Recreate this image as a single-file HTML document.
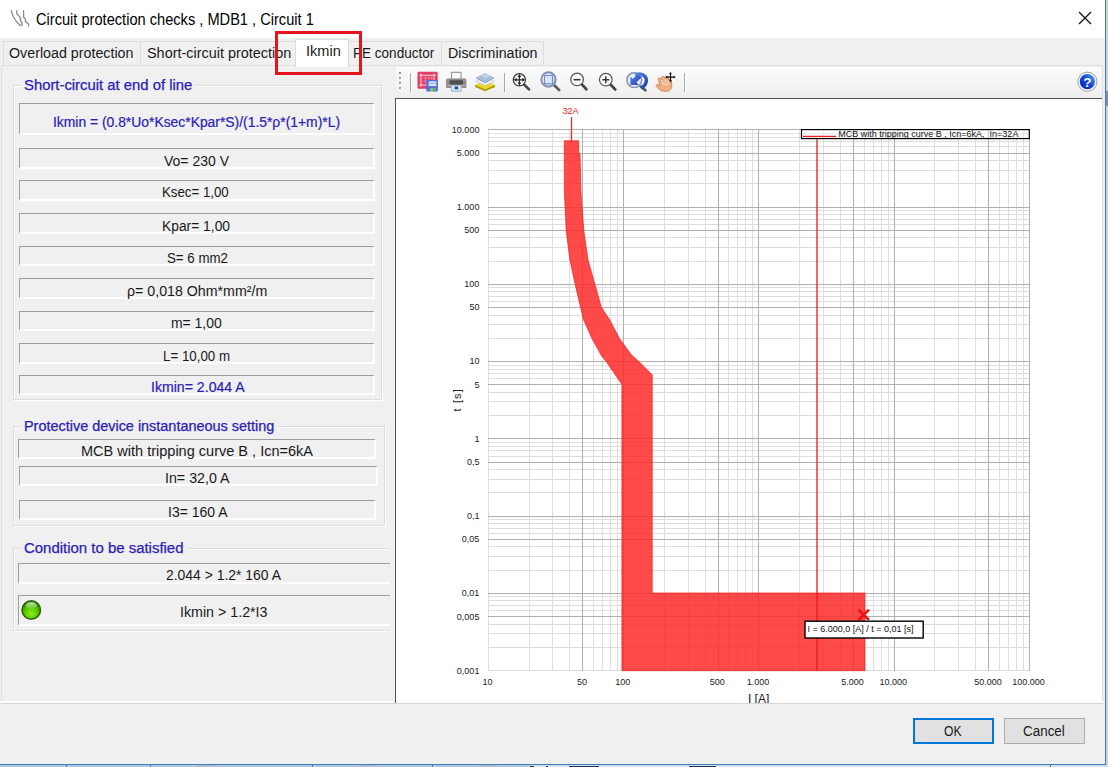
<!DOCTYPE html>
<html><head><meta charset="utf-8"><title>Circuit protection checks</title>
<style>
html,body{margin:0;padding:0;}
body{width:1108px;height:767px;overflow:hidden;position:relative;background:#bcd3ea;font-family:"Liberation Sans",sans-serif;}
.abs{position:absolute;}
.t{position:absolute;white-space:nowrap;transform-origin:0 50%;display:block;}
.sunk{position:absolute;box-sizing:border-box;border-top:1.2px solid #9c9c9c;border-left:1.2px solid #9c9c9c;border-bottom:2px solid #fff;border-right:2px solid #fff;background:#f0f0f0;}
.grp{position:absolute;box-sizing:border-box;border:1px solid #dddddd;box-shadow:1px 1px 0 #fff, inset 1px 1px 0 #fff;}
.gt{position:absolute;background:#f0f0f0;}
.tab{position:absolute;box-sizing:border-box;border:1px solid #dcdcdc;border-bottom:none;background:#f0f0f0;}
.btn{position:absolute;box-sizing:border-box;background:#e1e1e1;border:1px solid #adadad;}
</style></head><body>

<div class="abs" id="dlg" style="left:0;top:0;width:1105px;height:764px;background:#f0f0f0;border-right:1px solid #3f7cba;border-bottom:1px solid #3f7cba;overflow:hidden;">
<div class="abs" style="left:0;top:0;width:1105px;height:37.5px;background:#fff;"></div>
<svg class="abs" style="left:9px;top:8px" width="22" height="20" viewBox="0 0 22 20">
<g fill="none" stroke="#8a8a8a" stroke-width="1.3" stroke-linecap="round">
<path d="M2.3 2.6 C3.5 8 6.5 13.5 11.5 17.6"/>
<path d="M7.8 2.6 L7.8 5.5 L11.3 9.5 L11.3 12.5 L13 14.5 L13 17.6"/>
<path d="M14.6 2.6 L14.6 9 L16.5 11.5 L16.5 13.6 L19.6 16 L19.6 18"/>
</g></svg>
<span class="t" id="title" style="left:35.70px;top:9.56px;font-size:16px;line-height:19.200px;color:#000;transform:scaleX(0.9135);">Circuit protection checks , MDB1 , Circuit 1</span>
<svg class="abs" style="left:1077px;top:10px" width="16" height="16" viewBox="0 0 16 16"><path d="M2 2 L14 14 M14 2 L2 14" stroke="#111" stroke-width="1.3" fill="none"/></svg>
<div class="tab" style="left:3px;top:40.5px;width:137.5px;height:25px;"></div>
<span class="t" id="tab1" style="left:9.25px;top:44.75px;font-size:14px;line-height:16.800px;color:#1a1a1a;transform:scaleX(1.0189);">Overload protection</span>
<div class="tab" style="left:139.5px;top:40.5px;width:156.5px;height:25px;"></div>
<span class="t" id="tab2" style="left:146.75px;top:44.75px;font-size:14px;line-height:16.800px;color:#1a1a1a;transform:scaleX(1.0299);">Short-circuit protection</span>
<div class="tab" style="left:347px;top:40.5px;width:95px;height:25px;"></div>
<span class="t" id="tab4" style="left:353.00px;top:44.75px;font-size:14px;line-height:16.800px;color:#1a1a1a;transform:scaleX(0.9665);">PE conductor</span>
<div class="tab" style="left:441px;top:40.5px;width:103px;height:25px;"></div>
<span class="t" id="tab5" style="left:448.00px;top:44.75px;font-size:14px;line-height:16.800px;color:#1a1a1a;transform:scaleX(1.0179);">Discrimination</span>
<div class="abs" style="left:1px;top:65px;width:1102px;height:637px;box-sizing:border-box;border:1px solid #e0e0e0;background:#f0f0f0;"></div>
<div class="abs" style="left:1px;top:701px;width:1102px;height:1.5px;background:#fff;"></div>
<div class="abs" style="left:1px;top:702.5px;width:1102px;height:1px;background:#d5d5d5;"></div>
<div class="tab" style="left:294.5px;top:38.5px;width:54px;height:28px;background:#fff;"></div>
<span class="t" id="tab3" style="left:305.75px;top:42.65px;font-size:14px;line-height:16.800px;color:#1a1a1a;transform:scaleX(1.0388);">Ikmin</span>
<div class="abs" style="left:275px;top:30.5px;width:86.5px;height:44.2px;box-sizing:border-box;border:3px solid #e3141b;"></div>
<div class="abs" style="left:2px;top:66px;width:388px;height:635px;overflow:hidden;">
<div class="grp" style="left:11px;top:18.5px;width:368.5px;height:315.5px;"></div>
<div class="gt" style="left:19px;top:9.5px;width:175px;height:18px;"></div>
<div class="grp" style="left:11px;top:359.5px;width:372px;height:100.25px;"></div>
<div class="gt" style="left:19px;top:350.5px;width:257px;height:18px;"></div>
<div class="grp" style="left:11px;top:482px;width:427px;height:83.25px;"></div>
<div class="gt" style="left:19px;top:473px;width:166px;height:18px;"></div>
<div class="sunk" style="left:17px;top:36.5px;width:356px;height:32.5px;"></div>
<div class="sunk" style="left:17px;top:82.25px;width:356px;height:21.0px;"></div>
<div class="sunk" style="left:17px;top:113.5px;width:356px;height:21.0px;"></div>
<div class="sunk" style="left:17px;top:147px;width:356px;height:21.25px;"></div>
<div class="sunk" style="left:17px;top:179.5px;width:356px;height:20.75px;"></div>
<div class="sunk" style="left:17px;top:212.25px;width:356px;height:20.5px;"></div>
<div class="sunk" style="left:17px;top:244.75px;width:356px;height:20.5px;"></div>
<div class="sunk" style="left:17px;top:277.25px;width:356px;height:20.5px;"></div>
<div class="sunk" style="left:17px;top:308.5px;width:356px;height:20.5px;"></div>
<div class="sunk" style="left:15.5px;top:372.75px;width:358.75px;height:20.0px;"></div>
<div class="sunk" style="left:17px;top:399.75px;width:358.5px;height:20.5px;"></div>
<div class="sunk" style="left:17px;top:433.5px;width:357px;height:20.5px;"></div>
<div class="sunk" style="left:15.5px;top:497.25px;width:412.5px;height:20.5px;"></div>
<div class="sunk" style="left:15.5px;top:528.5px;width:412.5px;height:31.75px;"></div>
</div>
<span class="t" id="g1" style="left:24.25px;top:76.75px;font-size:14px;line-height:16.800px;color:#2a22b6;transform:scaleX(1.0598);-webkit-text-stroke:0.25px #2a22b6;">Short-circuit at end of line</span>
<span class="t" id="g2" style="left:24.25px;top:417.95px;font-size:14px;line-height:16.800px;color:#2a22b6;transform:scaleX(1.0306);-webkit-text-stroke:0.25px #2a22b6;">Protective device instantaneous setting</span>
<span class="t" id="g3" style="left:24.25px;top:540.25px;font-size:14px;line-height:16.800px;color:#2a22b6;transform:scaleX(1.0673);-webkit-text-stroke:0.25px #2a22b6;">Condition to be satisfied</span>
<span class="t" id="formula" style="left:53.00px;top:113.65px;font-size:14px;line-height:16.800px;color:#2a22b6;transform:scaleX(0.9909);-webkit-text-stroke:0.2px #2a22b6;">Ikmin = (0.8*Uo*Ksec*Kpar*S)/(1.5*ρ*(1+m)*L)</span>
<span class="t" id="vo" style="left:163.75px;top:153.25px;font-size:14px;line-height:16.800px;color:#1a1a1a;transform:scaleX(0.9998);">Vo= 230 V</span>
<span class="t" id="ksec" style="left:162.00px;top:184.45px;font-size:14px;line-height:16.800px;color:#1a1a1a;transform:scaleX(0.9476);">Ksec= 1,00</span>
<span class="t" id="kpar" style="left:162.00px;top:217.95px;font-size:14px;line-height:16.800px;color:#1a1a1a;transform:scaleX(0.9871);">Kpar= 1,00</span>
<span class="t" id="s" style="left:167.00px;top:250.45px;font-size:14px;line-height:16.800px;color:#1a1a1a;transform:scaleX(0.9501);">S= 6 mm2</span>
<span class="t" id="rho" style="left:126.75px;top:282.95px;font-size:14px;line-height:16.800px;color:#1a1a1a;transform:scaleX(1.0142);">ρ= 0,018 Ohm*mm²/m</span>
<span class="t" id="m" style="left:170.50px;top:315.45px;font-size:14px;line-height:16.800px;color:#1a1a1a;transform:scaleX(0.9954);">m= 1,00</span>
<span class="t" id="l" style="left:163.00px;top:347.95px;font-size:14px;line-height:16.800px;color:#1a1a1a;transform:scaleX(0.9512);">L= 10,00 m</span>
<span class="t" id="ik" style="left:150.75px;top:379.20px;font-size:14px;line-height:16.800px;color:#2a22b6;transform:scaleX(1.0079);-webkit-text-stroke:0.2px #2a22b6;">Ikmin= 2.044 A</span>
<span class="t" id="mcb" style="left:80.50px;top:442.95px;font-size:14px;line-height:16.800px;color:#1a1a1a;transform:scaleX(1.0371);">MCB with tripping curve B , Icn=6kA</span>
<span class="t" id="in" style="left:165.00px;top:469.95px;font-size:14px;line-height:16.800px;color:#1a1a1a;transform:scaleX(1.0165);">In= 32,0 A</span>
<span class="t" id="i3" style="left:168.00px;top:503.70px;font-size:14px;line-height:16.800px;color:#1a1a1a;transform:scaleX(0.9990);">I3= 160 A</span>
<span class="t" id="c1" style="left:166.25px;top:567.45px;font-size:14px;line-height:16.800px;color:#1a1a1a;transform:scaleX(0.9947);">2.044 &gt; 1.2* 160 A</span>
<span class="t" id="c2" style="left:179.50px;top:603.70px;font-size:14px;line-height:16.800px;color:#1a1a1a;transform:scaleX(1.0174);">Ikmin &gt; 1.2*I3</span>
<svg class="abs" style="left:20px;top:599px" width="22" height="22" viewBox="0 0 22 22">
<defs><radialGradient id="led" cx="0.5" cy="0.7" r="0.6"><stop offset="0" stop-color="#8cf01a"/><stop offset="0.6" stop-color="#58c800"/><stop offset="1" stop-color="#2f8f00"/></radialGradient>
<linearGradient id="ledh" x1="0" y1="0" x2="0" y2="1"><stop offset="0" stop-color="#fff" stop-opacity="0.75"/><stop offset="1" stop-color="#fff" stop-opacity="0"/></linearGradient></defs>
<circle cx="11.25" cy="11" r="9.2" fill="url(#led)" stroke="#2d6400" stroke-width="1.6"/>
<ellipse cx="11.25" cy="6.8" rx="5.6" ry="3.6" fill="url(#ledh)"/>
</svg>
<div class="abs" style="left:396px;top:67px;width:706px;height:31px;border-radius:0 4px 0 0;background:linear-gradient(#fbfbfb,#f4f4f4 60%,#ededed);"></div>
<div class="abs" style="left:399px;top:72px;width:2px;height:2px;background:#9c9c9c;box-shadow:1px 1px 0 #fff;"></div>
<div class="abs" style="left:399px;top:77px;width:2px;height:2px;background:#9c9c9c;box-shadow:1px 1px 0 #fff;"></div>
<div class="abs" style="left:399px;top:82px;width:2px;height:2px;background:#9c9c9c;box-shadow:1px 1px 0 #fff;"></div>
<div class="abs" style="left:399px;top:87px;width:2px;height:2px;background:#9c9c9c;box-shadow:1px 1px 0 #fff;"></div>
<div class="abs" style="left:410.0px;top:73px;width:1px;height:18.5px;background:#aaa;box-shadow:1px 0 0 #fff;"></div>
<div class="abs" style="left:504.0px;top:73px;width:1px;height:18.5px;background:#aaa;box-shadow:1px 0 0 #fff;"></div>
<div class="abs" style="left:683.5px;top:73px;width:1px;height:18.5px;background:#aaa;box-shadow:1px 0 0 #fff;"></div>
<svg class="abs" style="left:396px;top:66px" width="708" height="32" viewBox="396 66 708 32">
<defs>
<linearGradient id="hb" x1="0.1" y1="0.9" x2="0.9" y2="0.2"><stop offset="0" stop-color="#0a28c0"/><stop offset="0.55" stop-color="#1548d0"/><stop offset="1" stop-color="#3a90ea"/></linearGradient>
<linearGradient id="lensb" x1="0" y1="0" x2="1" y2="1"><stop offset="0" stop-color="#e3ebf9"/><stop offset="1" stop-color="#c3d1ec"/></linearGradient>
<linearGradient id="arrb" x1="0" y1="0" x2="1" y2="1"><stop offset="0" stop-color="#5a86e6"/><stop offset="1" stop-color="#1d3fb4"/></linearGradient>
</defs>
<!-- icon1: pink sheet + floppy -->
<rect x="417.5" y="71.8" width="20.2" height="17" rx="1.4" fill="#df3f66"/>
<g stroke="#fbd3dc" stroke-width="1" fill="none">
<path d="M419.3 75.3 H436.2 M419.3 85 H428 M421 73.4 V86.8 M434 73.4 V80.5"/>
<path d="M423.5 78 H432.5 M423.5 81 H427 M425.5 76.5 V83.5 M429 76.5 V80.5 M431.8 76.5 V80.5" stroke="#ee8aa4" stroke-width="0.8"/>
</g>
<rect x="426.3" y="79.9" width="11.5" height="11.7" rx="0.8" fill="#5470dc"/>
<rect x="428.7" y="81.3" width="7.6" height="4.8" fill="#dfe8fb"/>
<rect x="428.7" y="82.9" width="7.6" height="1.2" fill="#9db4ee"/>
<rect x="430.2" y="88.2" width="5.2" height="3.4" fill="#86cf7a"/>
<rect x="433" y="88.7" width="1.5" height="2.4" fill="#5b9a5a"/>
<!-- icon2: printer -->
<rect x="451.6" y="72.3" width="9.4" height="7" fill="#fdfdfd" stroke="#8c8c8c" stroke-width="1"/>
<path d="M447.6 78.6 H465 Q466.4 78.6 466.4 80.2 V87.9 H446.1 V80.2 Q446.1 78.6 447.6 78.6 Z" fill="#8d8d8d"/>
<rect x="449.6" y="80.2" width="13.4" height="4.3" rx="0.8" fill="#4f4f4f"/>
<rect x="447.2" y="85" width="18.2" height="1" fill="#b4b4b4"/>
<rect x="451.4" y="85.6" width="9.8" height="5.7" fill="#e1ebf7" stroke="#9fb2c8" stroke-width="0.8"/>
<rect x="454.6" y="86.6" width="3.6" height="2.6" fill="#27478a"/>
<rect x="452.6" y="89.6" width="7.4" height="0.9" fill="#9cc2e8"/>
<!-- icon3: layers -->
<path d="M475.2 85.2 L485.1 80.8 L495 85.2 V87 L485.1 91.2 L475.2 87 Z" fill="#a99700"/>
<path d="M475.2 85 L485.1 80.6 L495 85 L485.1 89.4 Z" fill="#ecd62a"/>
<path d="M475.8 81.4 L485.1 77.2 L494.4 81.4 L485.1 85.6 Z" fill="#eeeef8" stroke="#c3c5d6" stroke-width="0.7"/>
<path d="M476 77.4 L485.1 73 L494.2 77.4 L485.1 82 Z" fill="#a9c0d9"/>
<path d="M476 77.4 L485.1 82 L494.2 77.4 L494.2 78.3 L485.1 82.9 L476 78.3 Z" fill="#6f8db1"/>
<path d="M480 75.5 L485.1 73.2 L491 75.8 L485.6 78.2 Z" fill="#c7d8ea" opacity="0.8"/>
<!-- icon4: zoom extents -->
<path d="M523.9 84.4 L529 89.4" stroke="#454545" stroke-width="2.7" stroke-linecap="round"/>
<circle cx="519.4" cy="79.8" r="6.1" fill="#fff" stroke="#3a3a3a" stroke-width="1.3"/>
<g stroke="#2c2c2c" stroke-width="1.3" fill="#2c2c2c">
<path d="M519.4 75.6 V84 M515.2 79.8 H523.6" fill="none"/>
<path d="M519.4 74 L521.4 77 H517.4 Z M519.4 85.6 L521.4 82.6 H517.4 Z M513.6 79.8 L516.6 77.8 V81.8 Z M525.2 79.8 L522.2 77.8 V81.8 Z" stroke="none"/>
</g>
<!-- icon5: zoom window -->
<path d="M554.2 85.2 L559.2 90.1" stroke="#585858" stroke-width="2.7" stroke-linecap="round"/>
<circle cx="548.5" cy="79.5" r="7.2" fill="url(#lensb)" stroke="#8090ae" stroke-width="1.9"/>
<rect x="544.6" y="75.6" width="7.8" height="8.2" fill="#dbe6ff" stroke="#5f7fcf" stroke-width="0.9"/>
<!-- icon6: zoom out -->
<path d="M581.6 84.1 L586.4 89.2" stroke="#454545" stroke-width="2.7" stroke-linecap="round"/>
<circle cx="577.1" cy="79.4" r="6.3" fill="#fff" stroke="#555" stroke-width="1.25"/>
<path d="M573.6 79.7 H580.6" stroke="#333" stroke-width="1.6"/>
<!-- icon7: zoom in -->
<path d="M610.3 84.3 L615.3 89.5" stroke="#454545" stroke-width="2.7" stroke-linecap="round"/>
<circle cx="605.8" cy="79.7" r="6.3" fill="#fff" stroke="#555" stroke-width="1.25"/>
<path d="M602.3 79.8 H609.3 M605.8 76.3 V83.3" stroke="#333" stroke-width="1.5"/>
<!-- icon8: zoom previous -->
<path d="M640.8 86.6 L645.4 90.3" stroke="#3c5f58" stroke-width="2.7" stroke-linecap="round"/>
<circle cx="634.3" cy="80.1" r="7.4" fill="#e9eefa" stroke="#8593ab" stroke-width="1.6"/>
<path d="M636.6 74.6 C642 72.4 647.2 76.4 646.2 81.6 C645.7 84.4 644.2 86.2 642.4 87" fill="none" stroke="url(#arrb)" stroke-width="3.4" stroke-linecap="round"/>
<path d="M630.4 76.6 L630.4 85 L638.8 85 L636.4 82.6 L641.4 77.6 L637.8 74 L632.8 79 Z" fill="url(#arrb)"/>
<!-- icon9: pan hand -->
<path d="M658.6 80.4 C657.6 78.4 659.6 77 660.8 78.6 L661.6 79.6 C660.8 77 662.6 75.2 664.2 76.8 L665.2 78.2 C665.2 75.8 667.6 75.6 668.2 77.8 L668.8 80.2 C669.4 78.6 671.4 79 671.4 81 L671.8 85 C672 88.4 670.2 91.2 666.4 91.4 C662.4 91.6 660.4 90.4 658.2 88.4 L656.4 86.6 C655.6 85.4 656.6 84.2 658 84.8 L659.8 85.8 Z" fill="#f0b080" stroke="#cc8455" stroke-width="0.9"/>
<path d="M662 83 C664 84.5 666.5 85 669 84.2 M661.8 80.2 L663 83.4 M665.4 79 L666 83.2 M668.6 80.6 L668.8 83.4" stroke="#fbe3d1" stroke-width="1" fill="none"/>
<g stroke="#111" stroke-width="1.2" fill="#111">
<path d="M670.5 73 V81.2 M666.4 77.1 H674.6" fill="none"/>
<path d="M670.5 71.9 L671.9 73.9 H669.1 Z M670.5 82.3 L671.9 80.3 H669.1 Z M665.3 77.1 L667.3 75.7 V78.5 Z M675.7 77.1 L673.7 75.7 V78.5 Z" stroke="none"/>
</g>
<!-- help -->
<circle cx="1087.4" cy="81.7" r="9.6" fill="#f4f7fc" stroke="#a3a3a3" stroke-width="1"/>
<circle cx="1087.4" cy="81.7" r="7.6" fill="url(#hb)"/>
<text x="1087.4" y="86.6" font-family="Liberation Sans, sans-serif" font-weight="bold" font-size="13.5" fill="#fff" text-anchor="middle">?</text>
</svg>

<div class="abs" style="left:395px;top:97.5px;width:707px;height:605px;box-sizing:border-box;border-left:1.5px solid #555;border-top:1.5px solid #555;background:#fff;overflow:hidden;"></div>
<svg class="abs" style="left:396px;top:99px" width="706" height="603.5" viewBox="396 99 706 603.5" font-family="Liberation Sans, sans-serif">
<g stroke-width="1" shape-rendering="crispEdges">
<line x1="488.5" y1="129.8" x2="488.5" y2="670.7" stroke="#dedede"/>
<line x1="529.5" y1="129.8" x2="529.5" y2="670.7" stroke="#dedede"/>
<line x1="552.5" y1="129.8" x2="552.5" y2="670.7" stroke="#dedede"/>
<line x1="569.5" y1="129.8" x2="569.5" y2="670.7" stroke="#dedede"/>
<line x1="593.5" y1="129.8" x2="593.5" y2="670.7" stroke="#dedede"/>
<line x1="602.5" y1="129.8" x2="602.5" y2="670.7" stroke="#dedede"/>
<line x1="610.5" y1="129.8" x2="610.5" y2="670.7" stroke="#dedede"/>
<line x1="617.5" y1="129.8" x2="617.5" y2="670.7" stroke="#dedede"/>
<line x1="664.5" y1="129.8" x2="664.5" y2="670.7" stroke="#dedede"/>
<line x1="688.5" y1="129.8" x2="688.5" y2="670.7" stroke="#dedede"/>
<line x1="705.5" y1="129.8" x2="705.5" y2="670.7" stroke="#dedede"/>
<line x1="728.5" y1="129.8" x2="728.5" y2="670.7" stroke="#dedede"/>
<line x1="737.5" y1="129.8" x2="737.5" y2="670.7" stroke="#dedede"/>
<line x1="745.5" y1="129.8" x2="745.5" y2="670.7" stroke="#dedede"/>
<line x1="752.5" y1="129.8" x2="752.5" y2="670.7" stroke="#dedede"/>
<line x1="799.5" y1="129.8" x2="799.5" y2="670.7" stroke="#dedede"/>
<line x1="823.5" y1="129.8" x2="823.5" y2="670.7" stroke="#dedede"/>
<line x1="840.5" y1="129.8" x2="840.5" y2="670.7" stroke="#dedede"/>
<line x1="864.5" y1="129.8" x2="864.5" y2="670.7" stroke="#dedede"/>
<line x1="873.5" y1="129.8" x2="873.5" y2="670.7" stroke="#dedede"/>
<line x1="881.5" y1="129.8" x2="881.5" y2="670.7" stroke="#dedede"/>
<line x1="888.5" y1="129.8" x2="888.5" y2="670.7" stroke="#dedede"/>
<line x1="934.5" y1="129.8" x2="934.5" y2="670.7" stroke="#dedede"/>
<line x1="958.5" y1="129.8" x2="958.5" y2="670.7" stroke="#dedede"/>
<line x1="975.5" y1="129.8" x2="975.5" y2="670.7" stroke="#dedede"/>
<line x1="999.5" y1="129.8" x2="999.5" y2="670.7" stroke="#dedede"/>
<line x1="1008.5" y1="129.8" x2="1008.5" y2="670.7" stroke="#dedede"/>
<line x1="1016.5" y1="129.8" x2="1016.5" y2="670.7" stroke="#dedede"/>
<line x1="1023.5" y1="129.8" x2="1023.5" y2="670.7" stroke="#dedede"/>
<line x1="488.3" y1="670.5" x2="1029.5" y2="670.5" stroke="#dedede"/>
<line x1="488.3" y1="647.5" x2="1029.5" y2="647.5" stroke="#dedede"/>
<line x1="488.3" y1="633.5" x2="1029.5" y2="633.5" stroke="#dedede"/>
<line x1="488.3" y1="624.5" x2="1029.5" y2="624.5" stroke="#dedede"/>
<line x1="488.3" y1="610.5" x2="1029.5" y2="610.5" stroke="#dedede"/>
<line x1="488.3" y1="605.5" x2="1029.5" y2="605.5" stroke="#dedede"/>
<line x1="488.3" y1="600.5" x2="1029.5" y2="600.5" stroke="#dedede"/>
<line x1="488.3" y1="596.5" x2="1029.5" y2="596.5" stroke="#dedede"/>
<line x1="488.3" y1="570.5" x2="1029.5" y2="570.5" stroke="#dedede"/>
<line x1="488.3" y1="556.5" x2="1029.5" y2="556.5" stroke="#dedede"/>
<line x1="488.3" y1="546.5" x2="1029.5" y2="546.5" stroke="#dedede"/>
<line x1="488.3" y1="533.5" x2="1029.5" y2="533.5" stroke="#dedede"/>
<line x1="488.3" y1="528.5" x2="1029.5" y2="528.5" stroke="#dedede"/>
<line x1="488.3" y1="523.5" x2="1029.5" y2="523.5" stroke="#dedede"/>
<line x1="488.3" y1="519.5" x2="1029.5" y2="519.5" stroke="#dedede"/>
<line x1="488.3" y1="492.5" x2="1029.5" y2="492.5" stroke="#dedede"/>
<line x1="488.3" y1="479.5" x2="1029.5" y2="479.5" stroke="#dedede"/>
<line x1="488.3" y1="469.5" x2="1029.5" y2="469.5" stroke="#dedede"/>
<line x1="488.3" y1="456.5" x2="1029.5" y2="456.5" stroke="#dedede"/>
<line x1="488.3" y1="450.5" x2="1029.5" y2="450.5" stroke="#dedede"/>
<line x1="488.3" y1="446.5" x2="1029.5" y2="446.5" stroke="#dedede"/>
<line x1="488.3" y1="442.5" x2="1029.5" y2="442.5" stroke="#dedede"/>
<line x1="488.3" y1="415.5" x2="1029.5" y2="415.5" stroke="#dedede"/>
<line x1="488.3" y1="401.5" x2="1029.5" y2="401.5" stroke="#dedede"/>
<line x1="488.3" y1="392.5" x2="1029.5" y2="392.5" stroke="#dedede"/>
<line x1="488.3" y1="378.5" x2="1029.5" y2="378.5" stroke="#dedede"/>
<line x1="488.3" y1="373.5" x2="1029.5" y2="373.5" stroke="#dedede"/>
<line x1="488.3" y1="369.5" x2="1029.5" y2="369.5" stroke="#dedede"/>
<line x1="488.3" y1="365.5" x2="1029.5" y2="365.5" stroke="#dedede"/>
<line x1="488.3" y1="338.5" x2="1029.5" y2="338.5" stroke="#dedede"/>
<line x1="488.3" y1="324.5" x2="1029.5" y2="324.5" stroke="#dedede"/>
<line x1="488.3" y1="315.5" x2="1029.5" y2="315.5" stroke="#dedede"/>
<line x1="488.3" y1="301.5" x2="1029.5" y2="301.5" stroke="#dedede"/>
<line x1="488.3" y1="296.5" x2="1029.5" y2="296.5" stroke="#dedede"/>
<line x1="488.3" y1="291.5" x2="1029.5" y2="291.5" stroke="#dedede"/>
<line x1="488.3" y1="287.5" x2="1029.5" y2="287.5" stroke="#dedede"/>
<line x1="488.3" y1="261.5" x2="1029.5" y2="261.5" stroke="#dedede"/>
<line x1="488.3" y1="247.5" x2="1029.5" y2="247.5" stroke="#dedede"/>
<line x1="488.3" y1="237.5" x2="1029.5" y2="237.5" stroke="#dedede"/>
<line x1="488.3" y1="224.5" x2="1029.5" y2="224.5" stroke="#dedede"/>
<line x1="488.3" y1="219.5" x2="1029.5" y2="219.5" stroke="#dedede"/>
<line x1="488.3" y1="214.5" x2="1029.5" y2="214.5" stroke="#dedede"/>
<line x1="488.3" y1="210.5" x2="1029.5" y2="210.5" stroke="#dedede"/>
<line x1="488.3" y1="183.5" x2="1029.5" y2="183.5" stroke="#dedede"/>
<line x1="488.3" y1="170.5" x2="1029.5" y2="170.5" stroke="#dedede"/>
<line x1="488.3" y1="160.5" x2="1029.5" y2="160.5" stroke="#dedede"/>
<line x1="488.3" y1="146.5" x2="1029.5" y2="146.5" stroke="#dedede"/>
<line x1="488.3" y1="141.5" x2="1029.5" y2="141.5" stroke="#dedede"/>
<line x1="488.3" y1="137.5" x2="1029.5" y2="137.5" stroke="#dedede"/>
<line x1="488.3" y1="133.5" x2="1029.5" y2="133.5" stroke="#dedede"/>
<line x1="582.5" y1="129.8" x2="582.5" y2="670.7" stroke="#b0b0b0"/>
<line x1="623.5" y1="129.8" x2="623.5" y2="670.7" stroke="#b0b0b0"/>
<line x1="718.5" y1="129.8" x2="718.5" y2="670.7" stroke="#b0b0b0"/>
<line x1="758.5" y1="129.8" x2="758.5" y2="670.7" stroke="#b0b0b0"/>
<line x1="853.5" y1="129.8" x2="853.5" y2="670.7" stroke="#b0b0b0"/>
<line x1="894.5" y1="129.8" x2="894.5" y2="670.7" stroke="#b0b0b0"/>
<line x1="988.5" y1="129.8" x2="988.5" y2="670.7" stroke="#b0b0b0"/>
<line x1="1029.5" y1="129.8" x2="1029.5" y2="670.7" stroke="#b0b0b0"/>
<line x1="488.3" y1="616.5" x2="1029.5" y2="616.5" stroke="#b0b0b0"/>
<line x1="488.3" y1="593.5" x2="1029.5" y2="593.5" stroke="#b0b0b0"/>
<line x1="488.3" y1="539.5" x2="1029.5" y2="539.5" stroke="#b0b0b0"/>
<line x1="488.3" y1="516.5" x2="1029.5" y2="516.5" stroke="#b0b0b0"/>
<line x1="488.3" y1="462.5" x2="1029.5" y2="462.5" stroke="#b0b0b0"/>
<line x1="488.3" y1="438.5" x2="1029.5" y2="438.5" stroke="#b0b0b0"/>
<line x1="488.3" y1="384.5" x2="1029.5" y2="384.5" stroke="#b0b0b0"/>
<line x1="488.3" y1="361.5" x2="1029.5" y2="361.5" stroke="#b0b0b0"/>
<line x1="488.3" y1="307.5" x2="1029.5" y2="307.5" stroke="#b0b0b0"/>
<line x1="488.3" y1="284.5" x2="1029.5" y2="284.5" stroke="#b0b0b0"/>
<line x1="488.3" y1="230.5" x2="1029.5" y2="230.5" stroke="#b0b0b0"/>
<line x1="488.3" y1="207.5" x2="1029.5" y2="207.5" stroke="#b0b0b0"/>
<line x1="488.3" y1="153.5" x2="1029.5" y2="153.5" stroke="#b0b0b0"/>
<line x1="488.3" y1="129.5" x2="1029.5" y2="129.5" stroke="#b0b0b0"/>
</g>
<polygon points="564.2,140.8 564.4,192.5 566.2,230.5 569.9,260.0 575.2,284.5 580.5,307.3 583.7,320.0 592.0,338.6 601.0,355.0 606.7,362.3 621.9,384.4 621.9,670.7 865.0,670.7 865.0,593.0 652.2,593.0 652.2,374.8 639.7,362.3 631.5,355.0 619.5,338.6 609.8,320.0 601.3,307.3 595.0,284.5 588.0,260.0 583.8,230.5 581.0,192.5 580.0,153.6 578.7,153.0 578.7,140.8" fill="#ff2a2a" fill-opacity="0.85" stroke="#f02020" stroke-opacity="0.7" stroke-width="1"/>
<line x1="571.5" y1="117" x2="571.5" y2="142" stroke="#dc3030" stroke-width="1.3"/>
<text id="c32" x="570.6" y="114.3" font-size="9" fill="#f02020" text-anchor="middle">32A</text>
<rect x="801.5" y="129.6" width="227.8" height="9" fill="#fff" fill-opacity="0.35" stroke="#000" stroke-width="1.2"/>
<line x1="803" y1="136.3" x2="836" y2="136.3" stroke="#e82020" stroke-width="1.2"/>
<text id="cleg" x="838.3" y="136.6" font-size="9" fill="#111" xml:space="preserve">MCB with tripping curve B , Icn=6kA,  In=32A</text>
<line x1="817" y1="139" x2="817" y2="670.7" stroke="#f01818" stroke-width="1.3"/>
<text x="479.4" y="132.6" font-size="9" fill="#222" text-anchor="end">10.000</text>
<text x="479.4" y="155.8" font-size="9" fill="#222" text-anchor="end">5.000</text>
<text x="479.4" y="209.8" font-size="9" fill="#222" text-anchor="end">1.000</text>
<text x="479.4" y="233.1" font-size="9" fill="#222" text-anchor="end">500</text>
<text x="479.4" y="287.1" font-size="9" fill="#222" text-anchor="end">100</text>
<text x="479.4" y="310.4" font-size="9" fill="#222" text-anchor="end">50</text>
<text x="479.4" y="364.4" font-size="9" fill="#222" text-anchor="end">10</text>
<text x="479.4" y="387.7" font-size="9" fill="#222" text-anchor="end">5</text>
<text x="479.4" y="441.7" font-size="9" fill="#222" text-anchor="end">1</text>
<text x="479.4" y="464.9" font-size="9" fill="#222" text-anchor="end">0,5</text>
<text x="479.4" y="518.9" font-size="9" fill="#222" text-anchor="end">0,1</text>
<text x="479.4" y="542.2" font-size="9" fill="#222" text-anchor="end">0,05</text>
<text x="479.4" y="596.2" font-size="9" fill="#222" text-anchor="end">0,01</text>
<text x="479.4" y="619.5" font-size="9" fill="#222" text-anchor="end">0,005</text>
<text x="479.4" y="673.5" font-size="9" fill="#222" text-anchor="end">0,001</text>
<text x="487.4" y="684.9" font-size="9" fill="#222" text-anchor="middle">10</text>
<text x="582.0" y="684.9" font-size="9" fill="#222" text-anchor="middle">50</text>
<text x="622.7" y="684.9" font-size="9" fill="#222" text-anchor="middle">100</text>
<text x="717.3" y="684.9" font-size="9" fill="#222" text-anchor="middle">500</text>
<text x="758.0" y="684.9" font-size="9" fill="#222" text-anchor="middle">1.000</text>
<text x="852.6" y="684.9" font-size="9" fill="#222" text-anchor="middle">5.000</text>
<text x="893.3" y="684.9" font-size="9" fill="#222" text-anchor="middle">10.000</text>
<text x="987.9" y="684.9" font-size="9" fill="#222" text-anchor="middle">50.000</text>
<text x="1028.6" y="684.9" font-size="9" fill="#222" text-anchor="middle">100.000</text>
<text x="758.6" y="702.7" font-size="12" fill="#222" text-anchor="middle">I [A]</text>
<text transform="translate(460.6,399.8) rotate(-90)" font-size="11" letter-spacing="1.1" fill="#222" text-anchor="middle">t [s]</text>
<path d="M858.6 609.6 L869 619.9 M869 609.6 L858.6 619.9" stroke="#f01010" stroke-width="2.6" fill="none"/>
<rect x="805" y="621.2" width="118.2" height="16.8" fill="#fff" stroke="#000" stroke-width="1.4"/>
<text id="ctip" x="807.4" y="631.8" font-size="9" fill="#111">I = 6.000,0 [A] / t = 0,01 [s]</text>
</svg>
<div class="btn" style="left:912.5px;top:718px;width:81px;height:25.5px;border:2px solid #0078d7;"></div>
<div class="btn" style="left:1003.8px;top:718px;width:81px;height:25.5px;"></div>
<span class="t" id="ok" style="left:943.50px;top:723.45px;font-size:14px;line-height:16.800px;color:#1a1a1a;transform:scaleX(0.8649);">OK</span>
<span class="t" id="cancel" style="left:1023.00px;top:723.45px;font-size:14px;line-height:16.800px;color:#1a1a1a;transform:scaleX(0.9589);">Cancel</span>
</div>
<div class="abs" style="left:0;top:765px;width:530px;height:2px;background:#aec8e8;"></div>
<div class="abs" style="left:530px;top:765px;width:578px;height:2px;background:#d3deeb;"></div>
<div class="abs" style="left:66px;top:765px;width:1px;height:2px;background:#4a78ac;"></div>
<div class="abs" style="left:150px;top:765px;width:1px;height:2px;background:#4a78ac;"></div>
<div class="abs" style="left:312px;top:765px;width:1px;height:2px;background:#4a78ac;"></div>
<div class="abs" style="left:358px;top:765px;width:1px;height:2px;background:#4a78ac;"></div>
<div class="abs" style="left:432px;top:765px;width:1px;height:2px;background:#4a78ac;"></div>
<div class="abs" style="left:1050px;top:765px;width:1px;height:2px;background:#4a78ac;"></div>
<div class="abs" style="left:196px;top:765px;width:19px;height:2px;background:#b4bccb;"></div>
<div class="abs" style="left:358px;top:765px;width:17px;height:2px;background:#b4bccb;"></div>
<div class="abs" style="left:478px;top:765px;width:19px;height:2px;background:#b4bccb;"></div>
<div class="abs" style="left:569px;top:765.5px;width:30px;height:1.5px;background:#2a3340;"></div>
<div class="abs" style="left:689px;top:765.5px;width:27px;height:1.5px;background:#2a3340;"></div>
<div class="abs" style="left:530px;top:765.5px;width:4px;height:1.5px;background:#2a3340;"></div>
<div class="abs" style="left:546px;top:765.5px;width:2px;height:1.5px;background:#2a3340;"></div>
<div class="abs" style="left:1106px;top:0;width:2px;height:764px;background:#d2d2d2;"></div>
<div class="abs" style="left:1106px;top:91px;width:2px;height:15px;background:#8a86b8;"></div>
</body></html>
